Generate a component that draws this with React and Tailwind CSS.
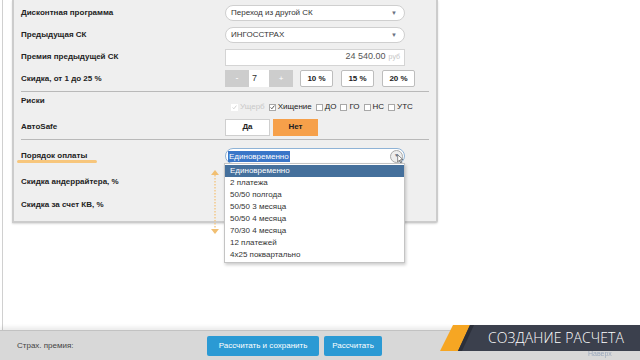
import { useState } from "react";

const font = { fontFamily: '"Liberation Sans", Arial, sans-serif' };

const paymentOptions = [
    "Единовременно",
    "2 платежа",
    "50/50 полгода",
    "50/50 3 месяца",
    "50/50 4 месяца",
    "70/30 4 месяца",
    "12 платежей",
    "4x25 поквартально",
];

function Caret() {
    return <span className="text-[6px] text-gray-500 leading-none">▼</span>;
}

function Select({ value }) {
    return (
        <div className="w-[180px] h-[16px] rounded-full border border-[#cfcfcf] bg-white flex items-center justify-between pl-[5px] pr-[7px] text-[8px] text-[#333]">
            <span>{value}</span>
            <Caret />
        </div>
    );
}

function Check({ checked, disabled, label }) {
    return (
        <label className={`flex items-center gap-[2px] text-[8px] ${disabled ? "text-[#c8c8c8]" : "text-[#222]"}`}>
            <span className={`w-[7px] h-[7px] border flex items-center justify-center bg-white ${disabled ? "border-transparent" : "border-[#a8a8a8]"}`}>
                {checked && (
                    <svg viewBox="0 0 8 8" className="w-[7px] h-[7px]">
                        <path d="M1 4 L3 6 L7 1" fill="none" stroke={disabled ? "#c8c8c8" : "#333"} strokeWidth="1.3" />
                    </svg>
                )}
            </span>
            {label}
        </label>
    );
}

function Row({ label, h = "h-[22px]", children }) {
    return (
        <div className={`flex items-center ${h}`}>
            <div className="w-[204px] text-[8px] font-bold text-[#222]">{label}</div>
            {children}
        </div>
    );
}

export default function App() {
    const [discount, setDiscount] = useState(7);

    return (
        <div className="relative w-[640px] h-[360px] overflow-hidden bg-white flex flex-col" style={font}>
            <div className="flex-1 flex min-h-0">
                <div className="ml-[2px] w-px bg-[#d0d0d0]" />
                <div className="ml-[9px] w-[426px] self-start bg-[#efefef] border-x-2 border-b-2 border-[#cccccc] rounded-br-[3px] shadow-[0_1px_2px_rgba(0,0,0,0.15)] px-[7px] pt-[2px] pb-[5px]">
                    <Row label="Дисконтная программа">
                        <Select value="Переход из другой СК" />
                    </Row>
                    <Row label="Предыдущая СК">
                        <Select value="ИНГОССТРАХ" />
                    </Row>
                    <Row label="Премия предыдущей СК">
                        <div className="w-[180px] h-[17px] bg-white border border-[#d4d4d4] flex items-center justify-end gap-[3px] pr-[4px]">
                            <span className="text-[9px] text-[#555]">24 540.00</span>
                            <span className="text-[7px] text-[#c4c4c4]">руб</span>
                        </div>
                    </Row>
                    <Row label="Скидка, от 1 до 25 %" h="h-[21px]">
                        <div className="flex items-center h-[17px]">
                            <button onClick={() => setDiscount(Math.max(1, discount - 1))} className="w-[24px] h-full bg-[#cdcdcd] text-white text-[9px]">-</button>
                            <div className="w-[20px] h-full bg-white flex items-center pl-[3px] text-[9px] text-[#333]">{discount}</div>
                            <button onClick={() => setDiscount(Math.min(25, discount + 1))} className="w-[24px] h-full bg-[#cdcdcd] text-white text-[8px]">+</button>
                            <div className="flex gap-[8px] ml-[7px]">
                                {["10 %", "15 %", "20 %"].map((p) => (
                                    <button key={p} className="w-[33px] h-[17px] bg-white border border-[#bdbdbd] rounded-[2px] text-[8px] font-bold text-[#222]">{p}</button>
                                ))}
                            </div>
                        </div>
                    </Row>
                    <div className="mt-[2px] border-t border-[#b9b9b9]" />
                    <div className="flex h-[23px]">
                        <div className="w-[204px] text-[8px] font-bold text-[#222] pt-[3px]">Риски</div>
                        <div className="flex items-end gap-[4px] pb-[2px] pl-[6px]">
                            <Check checked disabled label="Ущерб" />
                            <Check checked label="Хищение" />
                            <Check label="ДО" />
                            <Check label="ГО" />
                            <Check label="НС" />
                            <Check label="УТС" />
                        </div>
                    </div>
                    <Row label="АвтоSafe" h="h-[24px]">
                        <div className="flex gap-[3px]">
                            <button className="w-[45px] h-[17px] bg-white border border-[#cfcfcf] text-[8px] font-bold text-[#222]">Да</button>
                            <button className="w-[45px] h-[17px] bg-[#f6a04a] text-[8px] font-bold text-[#222]">Нет</button>
                        </div>
                    </Row>
                    <div className="border-t border-[#b9b9b9]" />
                    <div className="flex items-center h-[30px] pt-[2px]">
                        <div className="w-[204px] relative text-[8px] font-bold text-[#222]">
                            Порядок оплаты
                            <div className="absolute left-[-4px] top-[10px] w-[80px] h-[3px] rounded-full bg-[#f7c67c] blur-[0.6px]" />
                        </div>
                        <div className="w-[180px] h-[16px] rounded-full border border-[#8fb3d6] bg-white flex items-center justify-between pl-[2px] pr-[1px]">
                            <span className="text-[8px] bg-[#3a76c8] text-white px-[1px] leading-[11px]">Единовременно</span>
                            <span className="relative w-[13px] h-[13px] rounded-full border border-[#aaa] bg-[#eee] flex items-center justify-center">
                                <span className="text-[5px] text-gray-500">▼</span>
                                <svg viewBox="0 0 10 14" className="absolute left-[6px] top-[3px] w-[7px] h-[10px]">
                                    <path d="M1 1 L1 11 L3.5 8.5 L5.5 13 L7 12.3 L5 8 L8.5 8 Z" fill="white" stroke="#333" strokeWidth="0.8" />
                                </svg>
                            </span>
                        </div>
                    </div>
                    <Row label="Скидка андеррайтера, %" h="h-[23px]" />
                    <Row label="Скидка за счет КВ, %" h="h-[23px]" />
                </div>
            </div>

            {/* dropdown list */}
            <ul className="absolute left-[224px] top-[163px] w-[181px] bg-white border border-[#c4c4c4] shadow-[1px_2px_3px_rgba(0,0,0,0.2)] text-[8px] text-[#333] py-px">
                {paymentOptions.map((o, i) => (
                    <li key={o} className={`h-[12px] leading-[12px] pl-[5px] ${i === 0 ? "bg-[#45709c] text-white" : ""}`}>{o}</li>
                ))}
            </ul>

            {/* orange scroll arrow */}
            <svg className="absolute left-[210px] top-[168px]" width="10" height="68" viewBox="0 0 10 68">
                <path d="M5 4 L5 64" stroke="#f3c98a" strokeWidth="1.5" strokeDasharray="1.5 1.5" />
                <path d="M1 7 L5 2 L9 7 Z" fill="#f1bf72" />
                <path d="M1 61 L5 66 L9 61 Z" fill="#f1bf72" />
            </svg>

            {/* bottom bar */}
            <div className="h-[30px] bg-[#d8d8d8] border-t border-[#c2c2c2] shadow-[0_-3px_4px_rgba(0,0,0,0.08)] flex items-center">
                <span className="ml-[17px] w-[190px] text-[8px] text-[#444]">Страх. премия:</span>
                <button className="h-[20px] w-[112px] bg-[#2b9ad4] rounded-[2px] text-white text-[8px]">Рассчитать и сохранить</button>
                <button className="ml-[5px] h-[20px] w-[58px] bg-[#2b9ad4] rounded-[2px] text-white text-[8px]">Рассчитать</button>
            </div>

            {/* banner */}
            <div className="absolute left-[438px] top-[325px] w-[202px] h-[28px]">
                <svg className="absolute inset-0" width="202" height="28" viewBox="0 0 202 28">
                    <path d="M17 0 L202 0 L202 26 L5 26 Z" fill="#3b404d" />
                    <path d="M15 0 L32 0 L20 26 L2 26 Z" fill="#f6a623" />
                    <path d="M32 0 L36 0 L24 26 L20 26 Z" fill="#2c303a" />
                </svg>
                <span className="absolute left-[50px] top-[5px] text-[14px] font-light text-white tracking-[0.1px] leading-[16px]" style={{ fontFamily: '"Open Sans", sans-serif' }}>СОЗДАНИЕ РАСЧЕТА</span>
                <span className="absolute left-[150px] top-[24px] text-[7px] text-[#7f93b0] opacity-70">Наверх</span>
            </div>
        </div>
    );
}
